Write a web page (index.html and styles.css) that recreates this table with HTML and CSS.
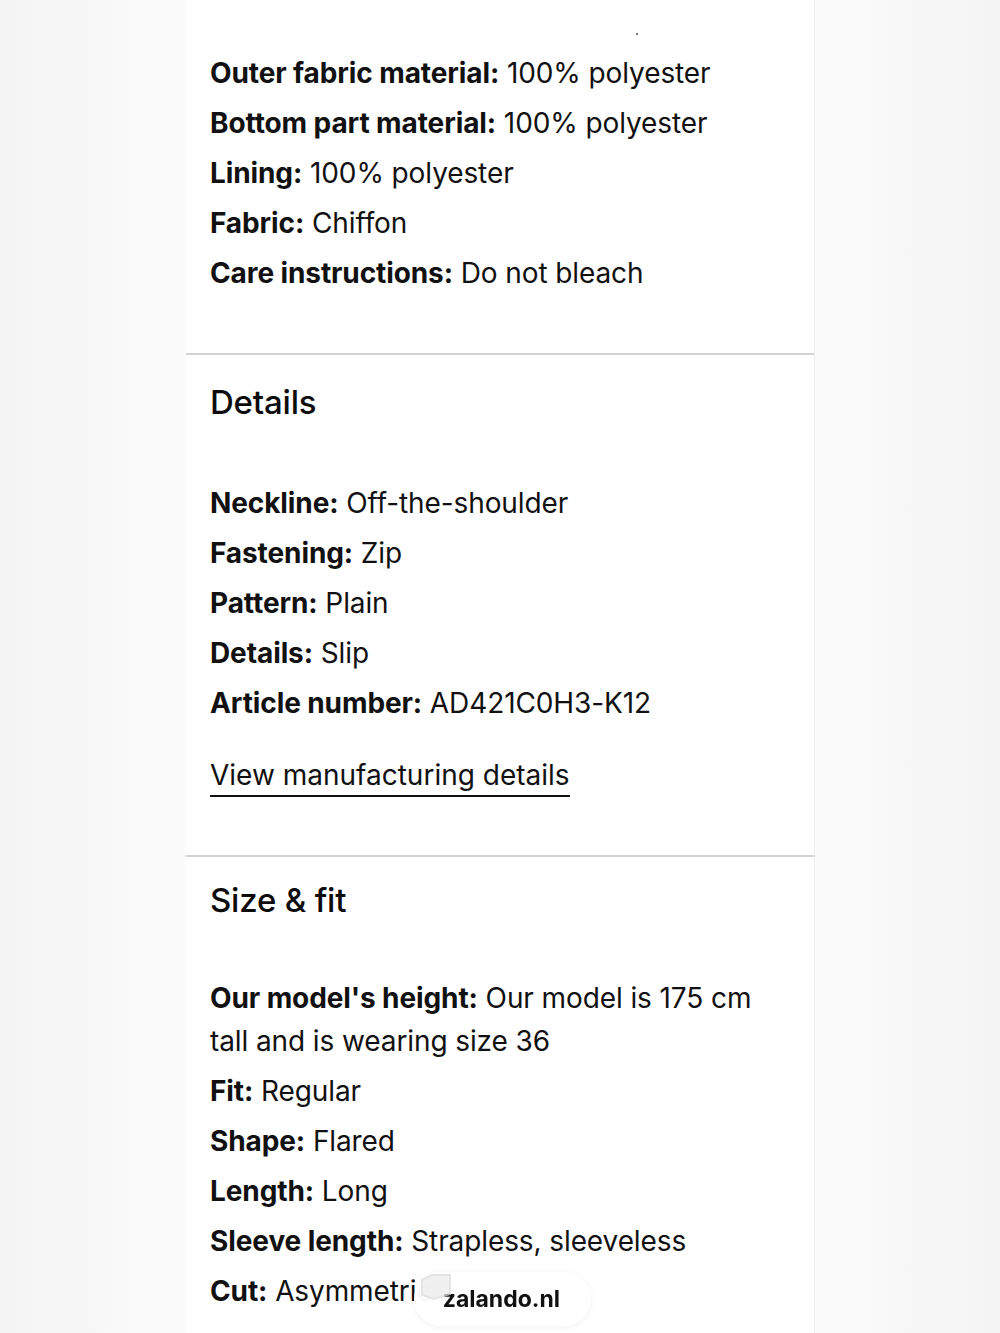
FILE: index.html
```html
<!DOCTYPE html>
<html lang="en">
<head>
  <meta charset="UTF-8">
  <meta name="viewport" content="width=device-width, initial-scale=1.0">
  <title>Material &amp; care - zalando.nl</title>
  <link rel="stylesheet" href="styles.css">
</head>
<body>
  <div class="page">
    <div class="sheet">
      <div class="section section-first">
        <span class="speck"></span>
        <ul class="attrs">
          <li><b>Outer fabric material:</b> 100% polyester</li>
          <li><b>Bottom part material:</b> 100% polyester</li>
          <li><b>Lining:</b> 100% polyester</li>
          <li><b>Fabric:</b> Chiffon</li>
          <li><b>Care instructions:</b> Do not bleach</li>
        </ul>
      </div>

      <div class="section">
        <h2>Details</h2>
        <ul class="attrs">
          <li><b>Neckline:</b> Off-the-shoulder</li>
          <li><b>Fastening:</b> Zip</li>
          <li><b>Pattern:</b> Plain</li>
          <li><b>Details:</b> Slip</li>
          <li><b>Article number:</b> AD421C0H3-K12</li>
        </ul>
        <a class="link" href="#">View manufacturing details</a>
      </div>

      <div class="section section-last">
        <h2>Size &amp; fit</h2>
        <ul class="attrs">
          <li><b>Our model's height:</b> Our model is 175 cm tall and is wearing size 36</li>
          <li><b>Fit:</b> Regular</li>
          <li><b>Shape:</b> Flared</li>
          <li><b>Length:</b> Long</li>
          <li><b>Sleeve length:</b> Strapless, sleeveless</li>
          <li><b>Cut:</b> Asymmetric</li>
        </ul>
      </div>
    </div>
  </div>

  <div class="source">
    <svg class="source-icon" width="40" height="34" viewBox="0 0 40 34">
      <path d="M6 10 L16 5 L34 5 L34 24 L18 29 L6 25 Z" fill="#ececec" stroke="#dcdcdc" stroke-width="2"/>
    </svg>
    <span>zalando.nl</span>
  </div>
</body>
</html>
```

FILE: styles.css
```css
html, body {
  margin: 0;
  padding: 0;
}

body {
  font-family: Inter, "Liberation Sans", Arial, sans-serif;
  color: #111;
  background: linear-gradient(90deg, #f4f4f4 0%, #fbfbfb 18%, #fbfbfb 82%, #f4f4f4 100%);
  min-height: 1333px;
  overflow: hidden;
}

.page {
  display: flex;
  justify-content: center;
}

.sheet {
  width: 628px;
  background-color: #fff;
  box-shadow: 1px 0 0 #ececec;
}

.section {
  position: relative;
  padding: 25px 24px 58px;
  border-bottom: 2px solid #d3d3d6;
}

.section-first {
  padding-top: 52px;
}

.section-last {
  padding-top: 21px;
  border-bottom: none;
}

.speck {
  position: absolute;
  top: 33px;
  left: 450px;
  width: 2px;
  height: 2px;
  background: #444;
  border-radius: 50%;
}

h2 {
  margin: 0 0 58px;
  font-size: 33px;
  font-weight: 500;
  line-height: 44px;
  color: #0c0c0c;
  letter-spacing: -0.2px;
}

.section-last h2 {
  margin-bottom: 55px;
}

.attrs {
  list-style: none;
  margin: 0;
  padding: 0;
}

.attrs li {
  font-size: 28px;
  line-height: 43px;
  margin-bottom: 7px;
  letter-spacing: -0.1px;
}

.attrs li:last-child {
  margin-bottom: 0;
}

.attrs b {
  font-weight: 700;
}

.link {
  display: inline-block;
  margin-top: 30px;
  font-size: 28px;
  line-height: 40px;
  color: #111;
  text-decoration: none;
  border-bottom: 2px solid #111;
}

.source {
  position: fixed;
  left: 414px;
  top: 1272px;
  width: 177px;
  height: 54px;
  display: flex;
  align-items: center;
  justify-content: flex-end;
  padding-right: 31px;
  box-sizing: border-box;
  background: rgba(255, 255, 255, 0.97);
  border-radius: 27px;
  box-shadow: 0 1px 6px rgba(0, 0, 0, 0.06);
  font-size: 23px;
  font-weight: 700;
  color: #111;
}

.source-icon {
  position: absolute;
  left: 2px;
  top: -2px;
  opacity: 0.75;
}
```
